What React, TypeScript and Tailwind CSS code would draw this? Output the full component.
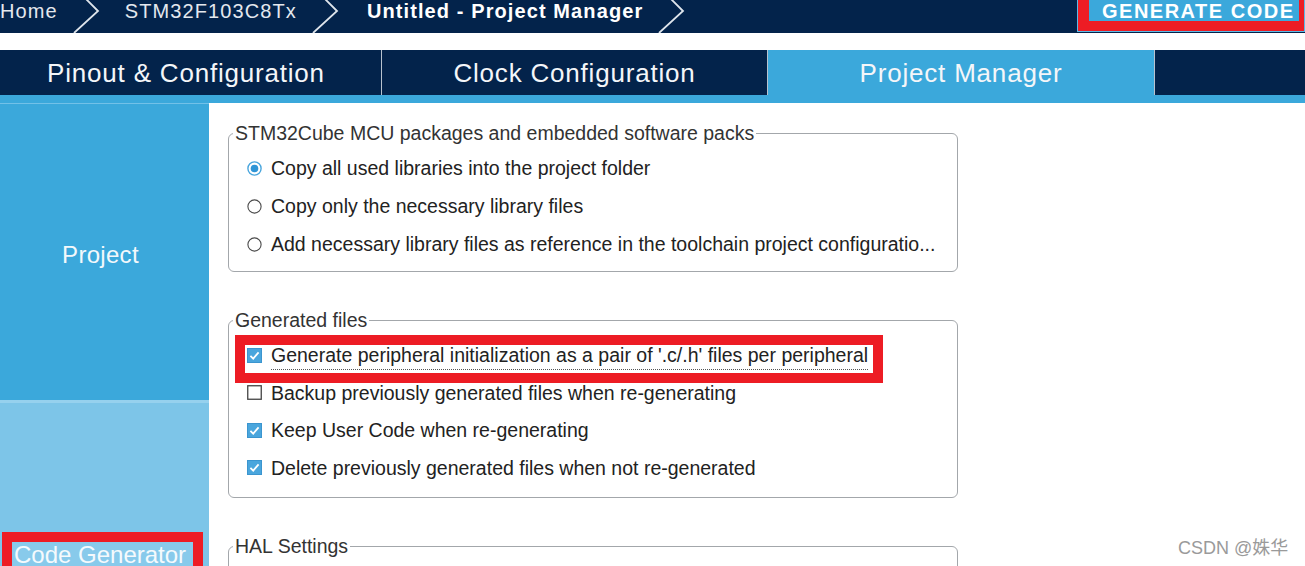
import React from 'react';

const NAVY = 'bg-[#03234b]';

function Chevron({ className = '' }: { className?: string }) {
  return (
    <svg width="28" height="33" viewBox="0 0 28 33" className={`shrink-0 ${className}`}>
      <path d="M14 -1 L26 11 L2 33" fill="none" stroke="#dfe5ec" strokeWidth="1.8" />
    </svg>
  );
}

function Radio({ checked }: { checked?: boolean }) {
  return (
    <svg width="15" height="15" viewBox="0 0 15 15" className="shrink-0">
      <circle cx="7.5" cy="7.5" r="6.6" fill="#fff" stroke={checked ? '#4aa6dd' : '#4a4a4a'} strokeWidth={checked ? 1.4 : 1.1} />
      {checked && <circle cx="7.5" cy="7.5" r="3.8" fill="#2f95d6" />}
    </svg>
  );
}

function Check({ checked }: { checked?: boolean }) {
  return (
    <svg width="15" height="15" viewBox="0 0 15 15" className="shrink-0">
      {checked ? (
        <>
          <rect x="0.5" y="0.5" width="14" height="14" fill="#4aa6dd" stroke="#3b95cf" />
          <path d="M3.4 7.8 L6.2 10.6 L11.6 4.3" fill="none" stroke="#fff" strokeWidth="1.8" />
        </>
      ) : (
        <rect x="0.75" y="0.75" width="13.5" height="13.5" fill="#fff" stroke="#444" strokeWidth="1.3" />
      )}
    </svg>
  );
}

function Group({ title, className = '', children }: { title: string; className?: string; children: React.ReactNode }) {
  return (
    <fieldset className={`w-[730px] rounded-[6px] border-[1.5px] border-[#a3a7ab] ${className}`}>
      <legend className="ml-[4px] px-[2px] text-[19.5px] leading-[22px] text-[#333]">{title}</legend>
      {children}
    </fieldset>
  );
}

export default function App() {
  const packs = [
    { label: 'Copy all used libraries into the project folder', checked: true },
    { label: 'Copy only the necessary library files', checked: false },
    { label: 'Add necessary library files as reference in the toolchain project configuratio...', checked: false },
  ];

  const files = [
    { label: 'Backup previously generated files when re-generating', checked: false },
    { label: 'Keep User Code when re-generating', checked: true },
    { label: 'Delete previously generated files when not re-generated', checked: true },
  ];

  return (
    <div className="relative flex h-[566px] w-[1305px] flex-col overflow-hidden bg-white font-['Liberation_Sans',Arial,sans-serif]">
      {/* breadcrumb bar */}
      <div className={`flex h-[33px] shrink-0 overflow-hidden ${NAVY}`}>
        <span className="pt-[1px] text-[20px] leading-[20px] tracking-[1.1px] text-[#e4e8ee]">Home</span>
        <Chevron className="ml-[14px]" />
        <span className="ml-[25px] pt-[1px] text-[20px] leading-[20px] tracking-[1.1px] text-[#e4e8ee]">STM32F103C8Tx</span>
        <Chevron className="ml-[14px]" />
        <span className="ml-[28px] pt-[1px] text-[20px] font-bold leading-[20px] tracking-[1.1px] text-white">Untitled - Project Manager</span>
        <Chevron className="ml-[14px]" />
        <div className="ml-auto h-[32px] w-[228px] self-start border-x border-b border-[#5cb9e6]">
          <div className="h-[31px] border-b-[10px] border-l-[11px] border-r-[5px] border-[#ed1c24] bg-[#3ba8db] pl-[13px] pt-[0.5px] text-[20px] font-bold leading-[20px] tracking-[1.5px] text-white">
            GENERATE CODE
          </div>
        </div>
      </div>

      {/* main tabs */}
      <div className={`mt-[17px] flex h-[45px] shrink-0 text-[26px] leading-[26px] tracking-[0.8px] text-[#f4f6f9] ${NAVY}`}>
        <div className="flex w-[382px] items-center justify-center border-r border-[#b8c2ce] pr-[9px]">Pinout &amp; Configuration</div>
        <div className="flex w-[386px] items-center justify-center border-r border-[#b8c2ce]">Clock Configuration</div>
        <div className="flex w-[387px] items-center justify-center border-r border-[#b8c2ce] bg-[#3ba8db]">Project Manager</div>
      </div>
      <div className="h-[8px] shrink-0 bg-[#3ba8db]" />

      <div className="flex min-h-0 flex-1">
        {/* side menu */}
        <div className="flex w-[209px] shrink-0 flex-col overflow-hidden">
          <div className="flex h-[297px] shrink-0 items-center justify-center border-t border-[#72c1e8] bg-[#3ba8db] pr-[8px] pt-[6px] text-[24px] leading-[24px] tracking-[0.3px] text-[#f3f8fb]">
            Project
          </div>
          <div className="h-[3px] shrink-0 bg-[#96d1ee]" />
          <div className="flex-1 shrink-0 bg-[#7dc5e8] pl-[2px] pt-[129px]">
            <div className="w-[201px] border-[10px] border-[#ed1c24]">
              <div className="h-[40px] bg-[#88caeb] pl-[2px] text-[24px] leading-[26px] text-[#f5fafd]">Code Generator</div>
            </div>
          </div>
        </div>

        {/* settings */}
        <div className="flex-1 pl-[19px] pt-[19px] text-[19.5px] leading-[22px] text-[#222]">
          <Group title="STM32Cube MCU packages and embedded software packs" className="pb-[8px] pt-[5px]">
            {packs.map((p) => (
              <div key={p.label} className="flex h-[38px] items-center gap-[9px] pl-[18px]">
                <Radio checked={p.checked} />
                <span>{p.label}</span>
              </div>
            ))}
          </Group>

          <Group title="Generated files" className="mt-[37px] pb-[10px] pt-[5.5px]">
            <div className="relative flex h-[37.5px] items-center gap-[9px] pl-[18px]">
              <Check checked />
              <span className="mt-[4px] border-b border-dotted border-[#555] pb-[3px]">
                Generate peripheral initialization as a pair of '.c/.h' files per peripheral
              </span>
              <div className="pointer-events-none absolute left-[5.5px] top-[-2px] h-[48px] w-[648px] border-[10px] border-[#ed1c24]" />
            </div>
            {files.map((f) => (
              <div key={f.label} className="flex h-[37.5px] items-center gap-[9px] pl-[18px]">
                <Check checked={f.checked} />
                <span>{f.label}</span>
              </div>
            ))}
          </Group>

          <Group title="HAL Settings" className="mt-[37.5px] h-[120px]">
            <div />
          </Group>
        </div>
      </div>

      <span className="absolute left-[1178px] top-[539px] font-['Liberation_Sans','Noto_Sans_CJK_SC',sans-serif] text-[18px] leading-[18px] text-[#9a9a9a]">
        CSDN @姝华
      </span>
    </div>
  );
}
